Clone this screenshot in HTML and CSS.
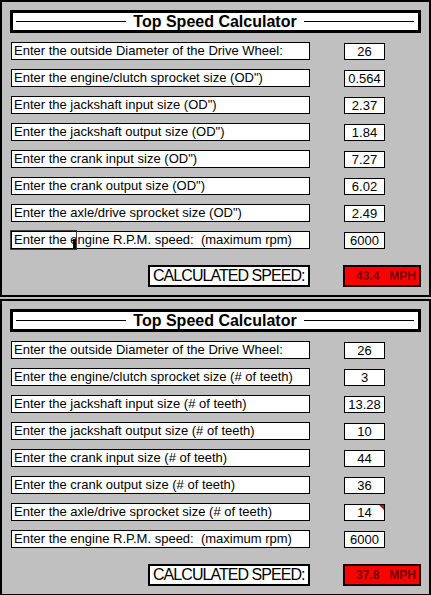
FILE: index.html
```html
<!DOCTYPE html>
<html>
<head>
<meta charset="utf-8">
<link rel="stylesheet" href="styles.css">
</head>
<body>
<div class="panel">
  <div class="title"><span class="rule"></span><span class="title-text">Top Speed Calculator</span><span class="rule"></span></div>
  <div class="rows">
    <div class="row"><div class="label">Enter the outside Diameter of the Drive Wheel:</div><div class="value">26</div></div>
    <div class="row"><div class="label">Enter the engine/clutch sprocket size (OD")</div><div class="value">0.564</div></div>
    <div class="row"><div class="label">Enter the jackshaft input size (OD")</div><div class="value">2.37</div></div>
    <div class="row"><div class="label">Enter the jackshaft output size (OD")</div><div class="value">1.84</div></div>
    <div class="row"><div class="label">Enter the crank input size (OD")</div><div class="value">7.27</div></div>
    <div class="row"><div class="label">Enter the crank output size (OD")</div><div class="value">6.02</div></div>
    <div class="row"><div class="label">Enter the axle/drive sprocket size (OD")</div><div class="value">2.49</div></div>
    <div class="row"><div class="label selected">Enter the engine R.P.M. speed:&nbsp; (maximum rpm)<span class="sel"></span><span class="handle"></span></div><div class="value">6000</div></div>
  </div>
  <div class="result-row">
    <div class="calc">CALCULATED SPEED:</div>
    <div class="speed"><span>43.4</span><span>MPH</span></div>
  </div>
</div>
<div class="panel second">
  <div class="title"><span class="rule"></span><span class="title-text">Top Speed Calculator</span><span class="rule"></span></div>
  <div class="rows">
    <div class="row"><div class="label">Enter the outside Diameter of the Drive Wheel:</div><div class="value">26</div></div>
    <div class="row"><div class="label">Enter the engine/clutch sprocket size (# of teeth)</div><div class="value">3</div></div>
    <div class="row"><div class="label">Enter the jackshaft input size (# of teeth)</div><div class="value">13.28</div></div>
    <div class="row"><div class="label">Enter the jackshaft output size (# of teeth)</div><div class="value">10</div></div>
    <div class="row"><div class="label">Enter the crank input size (# of teeth)</div><div class="value">44</div></div>
    <div class="row"><div class="label">Enter the crank output size (# of teeth)</div><div class="value">36</div></div>
    <div class="row"><div class="label">Enter the axle/drive sprocket size (# of teeth)</div><div class="value comment">14</div></div>
    <div class="row"><div class="label">Enter the engine R.P.M. speed:&nbsp; (maximum rpm)</div><div class="value">6000</div></div>
  </div>
  <div class="result-row">
    <div class="calc">CALCULATED SPEED:</div>
    <div class="speed"><span>37.8</span><span>MPH</span></div>
  </div>
</div>
</body>
</html>
```

FILE: styles.css
```css
* { box-sizing: border-box; }
html, body {
  margin: 0;
  padding: 0;
  background: #c0c0c0;
  overflow: hidden;
}
body {
  width: 431px;
  height: 595px;
  font-family: "Liberation Sans", Arial, sans-serif;
  color: #000;
}
.panel {
  width: 431px;
  height: 297px;
  border: 2px solid #000;
  background: #c0c0c0;
  padding: 8px 0 8px 0;
  display: flex;
  flex-direction: column;
}
.panel.second {
  margin-top: 2px;
}
.title {
  margin-left: 8px;
  width: 411px;
  height: 23px;
  border: 3px solid #000;
  background: #fff;
  display: flex;
  align-items: center;
  gap: 7px;
  padding: 0 4px 0 3px;
}
.rule {
  flex: 1;
  height: 1px;
  background: #000;
}
.title-text {
  font-weight: bold;
  font-size: 16px;
  line-height: 17px;
  white-space: nowrap;
}
.rows {
  margin-top: 9px;
  display: flex;
  flex-direction: column;
  gap: 9px;
}
.row {
  display: flex;
  align-items: flex-start;
  height: 18px;
}
.label {
  position: relative;
  margin-left: 9px;
  width: 299px;
  height: 18px;
  border: 1px solid #000;
  background: #fff;
  font-size: 13px;
  line-height: 16px;
  padding-left: 2px;
  white-space: nowrap;
}
.value {
  position: relative;
  margin-left: 34px;
  margin-top: 1px;
  width: 41px;
  height: 17px;
  border: 1px solid #000;
  background: #fff;
  font-size: 13px;
  line-height: 15px;
  text-align: center;
}
.value.comment::after {
  content: "";
  position: absolute;
  top: 0;
  right: 0;
  border-top: 5px solid #e00000;
  border-left: 5px solid transparent;
}
.sel {
  position: absolute;
  left: -2px;
  top: -2px;
  width: 67px;
  height: 20px;
  border: 1px solid #404040;
}
.handle {
  position: absolute;
  left: 61px;
  top: 7px;
  width: 3px;
  height: 10px;
  background: #000;
}
.result-row {
  margin-top: 16px;
  display: flex;
  height: 22px;
}
.calc {
  margin-left: 146px;
  width: 162px;
  height: 22px;
  border: 2px solid #000;
  background: #fff;
  font-size: 16px;
  line-height: 18px;
  letter-spacing: -0.95px;
  padding-left: 3px;
  white-space: nowrap;
}
.speed {
  margin-left: 33px;
  width: 78px;
  height: 22px;
  border: 2px solid #1a0000;
  background: #f00;
  color: #700000;
  font-weight: bold;
  font-size: 12px;
  line-height: 18px;
  display: flex;
  justify-content: flex-end;
  gap: 10px;
  padding-right: 3px;
}
```
